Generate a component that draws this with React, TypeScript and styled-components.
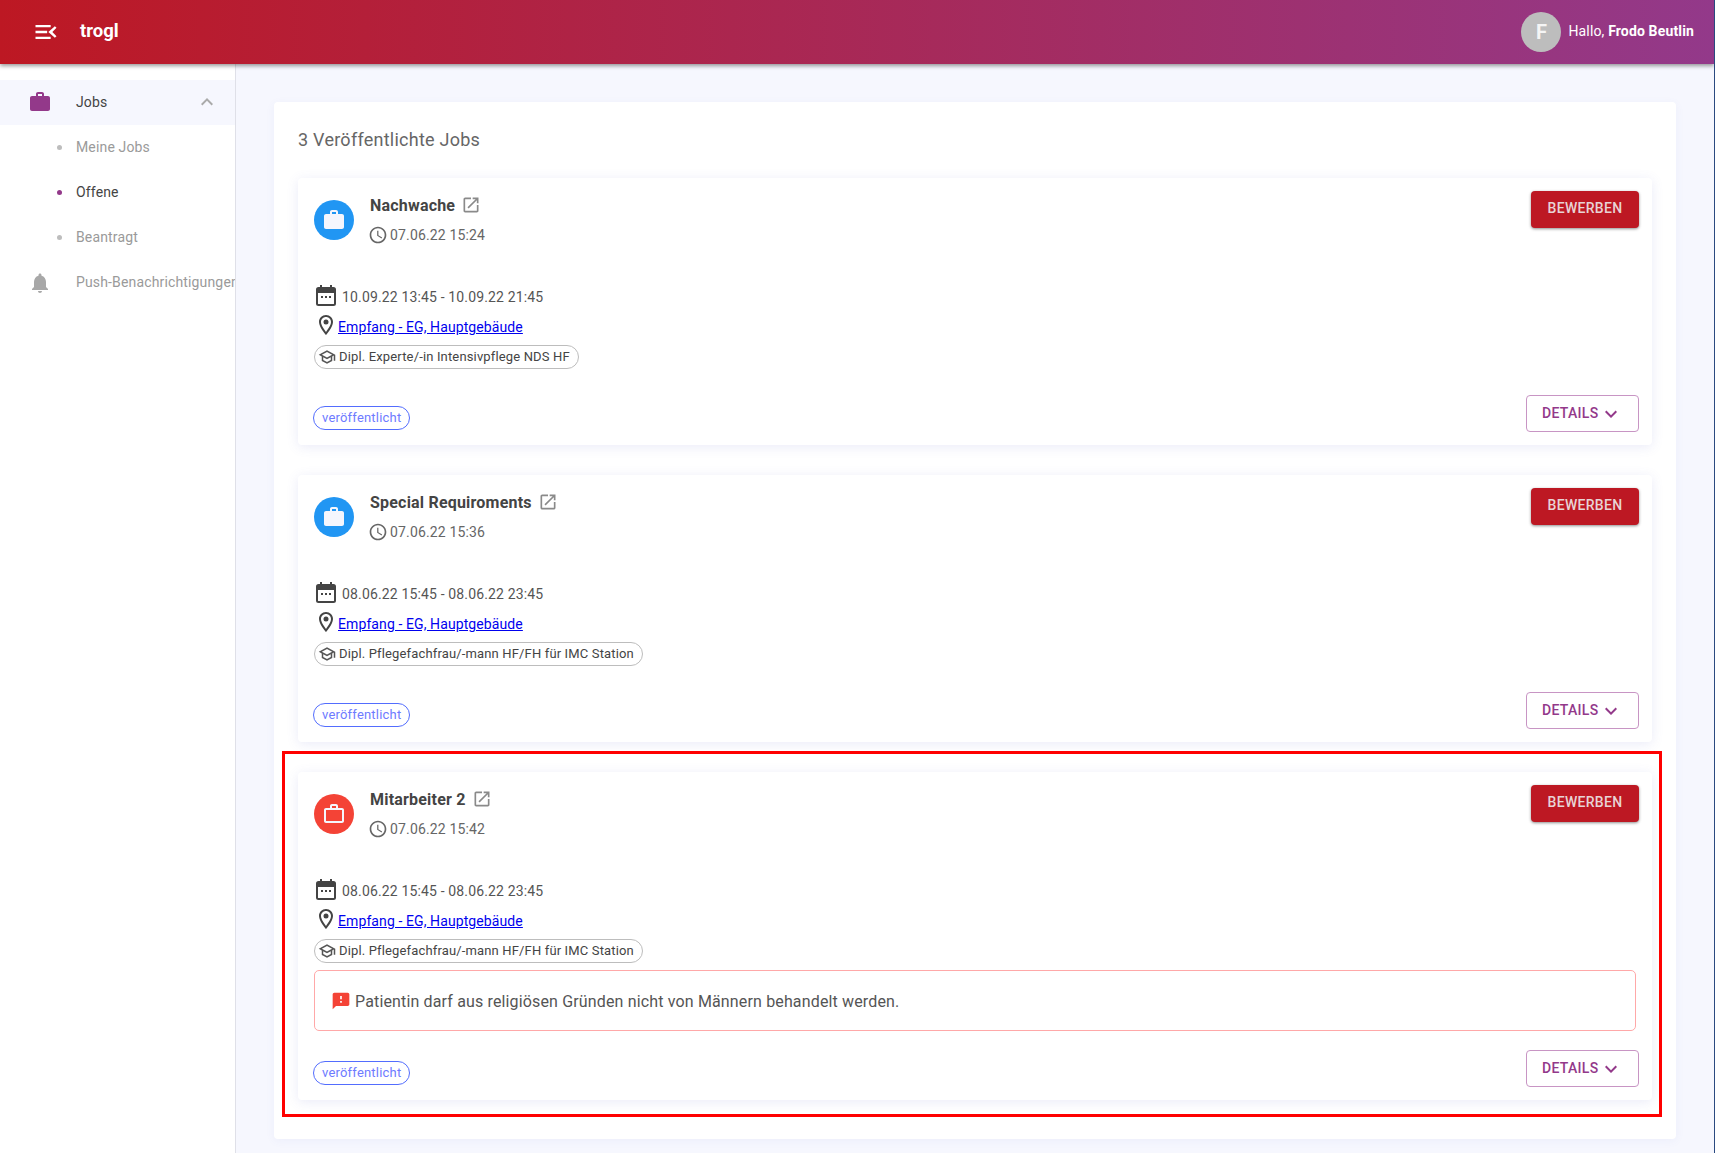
import React from "react";
import styled, { createGlobalStyle } from "styled-components";

const Global = createGlobalStyle`
  html, body { margin: 0; padding: 0; background: #f6f7fe; }
  body { font-family: Roboto, "Liberation Sans", sans-serif; }
  * { box-sizing: border-box; }
`;

const Page = styled.div`
  width: 1715px;
  height: 1153px;
  overflow: hidden;
  border-right: 1px solid #2a4a80;
  display: flex;
  flex-direction: column;
  background: #f6f7fe;
`;
const Header = styled.header`
  height: 64px;
  flex: none;
  display: flex;
  align-items: center;
  padding: 0 20px 0 32px;
  background: linear-gradient(90deg, #bd1823 0%, #93398a 100%);
  box-shadow: 0 2px 4px rgba(0, 0, 0, 0.4);
  color: #fff;
  position: relative;
  z-index: 2;
`;
const Burger = styled.svg`
  width: 28px;
  height: 28px;
  fill: #fff;
  margin-right: 20px;
`;
const Brand = styled.div`
  font-size: 18.5px;
  font-weight: 700;
  flex: 1;
  padding-bottom: 3px;
`;
const Avatar = styled.div`
  width: 40px;
  height: 40px;
  border-radius: 50%;
  background: #bdbdbd;
  display: flex;
  align-items: center;
  justify-content: center;
  font-size: 20px;
  font-weight: 700;
  color: #f5f5f5;
  margin-right: 7px;
`;
const Greeting = styled.div`
  font-size: 14px;
  letter-spacing: 0.15px;
  padding-bottom: 2px;
  b { font-weight: 700; }
`;
const Body = styled.div`
  flex: 1;
  display: flex;
  min-height: 0;
`;
const Sidebar = styled.nav`
  width: 236px;
  flex: none;
  background: #fff;
  border-right: 1px solid #dfe0e8;
  padding-top: 16px;
  overflow: hidden;
`;
const NavRow = styled.div<{ $selected?: boolean; $active?: boolean }>`
  height: 45px;
  display: flex;
  align-items: center;
  white-space: nowrap;
  font-size: 14px;
  letter-spacing: 0.15px;
  padding-bottom: 1px;
  color: ${(p) => (p.$active ? "#444" : "#9a9a9a")};
  background: ${(p) => (p.$selected ? "#f6f7fe" : "transparent")};
`;
const NavIconBox = styled.div`
  width: 76px;
  flex: none;
  display: flex;
  padding-left: 28px;
`;
const NavIcon = styled.svg<{ $c: string; $drop?: number }>`
  width: 24px;
  height: 24px;
  fill: ${(p) => p.$c};
  margin-top: ${(p) => p.$drop ?? 0}px;
`;
const Dot = styled.span<{ $on?: boolean }>`
  width: 5px;
  height: 5px;
  border-radius: 50%;
  background: ${(p) => (p.$on ? "#93398a" : "#bdbdbd")};
  margin-left: 57px;
  margin-right: 14px;
`;
const Chevron = styled.svg`
  width: 24px;
  height: 24px;
  fill: #aaa;
  margin-left: auto;
  margin-right: 16px;
`;
const Main = styled.main`
  flex: 1;
  padding: 38px 38px 0;
  min-width: 0;
`;
const Outer = styled.section`
  background: #fff;
  border-radius: 4px;
  box-shadow: 0 2px 10px rgba(90, 100, 200, 0.06);
  padding: 24px 24px 39px;
  height: 1037px;
`;
const Heading = styled.h2`
  margin: 0 0 24px;
  font-size: 18px;
  font-weight: 400;
  letter-spacing: 0.25px;
  line-height: 28px;
  color: #666;
`;
const Cards = styled.div`
  display: flex;
  flex-direction: column;
  gap: 30px;
`;
const Card = styled.article`
  position: relative;
  background: #fff;
  border-radius: 4px;
  box-shadow: 0 2px 12px rgba(90, 100, 200, 0.13);
  padding: 13px 13px 13px 16px;
`;
const Highlight = styled.div`
  position: absolute;
  left: -16px;
  right: -10px;
  top: -21px;
  bottom: -17px;
  border: 3px solid #ff0000;
  pointer-events: none;
`;
const CardHead = styled.div`
  display: flex;
  align-items: flex-start;
  height: 91px;
`;
const Round = styled.div<{ $c: string }>`
  width: 40px;
  height: 40px;
  margin-top: 9px;
  border-radius: 50%;
  background: ${(p) => p.$c};
  display: flex;
  align-items: center;
  justify-content: center;
  flex: none;
  svg { width: 24px; height: 24px; fill: #f5f6fd; }
`;
const TitleBlock = styled.div`
  margin-left: 16px;
  flex: 1;
`;
const TitleRow = styled.div`
  display: flex;
  align-items: center;
  height: 28px;
  font-size: 16px;
  font-weight: 700;
  letter-spacing: 0.2px;
  color: #444;
`;
const TitleLink = styled.svg`
  width: 20px;
  height: 20px;
  fill: #8a8a8a;
  margin-left: 6px;
`;
const TimeRow = styled.div`
  display: flex;
  align-items: center;
  height: 31px;
  margin-left: -2px;
  font-size: 14px;
  letter-spacing: 0.15px;
  color: #666;
  svg { width: 20px; height: 20px; fill: #666; margin-right: 2px; }
`;
const Primary = styled.button`
  width: 108px;
  height: 37px;
  border: 0;
  border-radius: 4px;
  background: #bd1823;
  color: #e8d3d5;
  font-family: inherit;
  font-size: 14px;
  font-weight: 500;
  letter-spacing: 0.3px;
  box-shadow: 0 1px 3px rgba(0, 0, 0, 0.45);
  padding: 0 0 3px;
`;
const Info = styled.div`
  display: flex;
  align-items: center;
  height: 30px;
`;
const DateText = styled.span`
  font-size: 14px;
  letter-spacing: 0.15px;
  color: #555;
  margin-left: 5px;
`;
const CalIcon = styled.svg`
  width: 22px;
  height: 24px;
  margin: 0 0 4px 1px;
  fill: none;
`;
const PinIcon = styled.svg`
  width: 24px;
  height: 24px;
  fill: #444;
  margin-bottom: 4px;
`;
const Place = styled.a`
  font-size: 14px;
  letter-spacing: 0.1px;
  color: #0000ee;
  text-decoration: underline;
`;
const ChipWrap = styled.div`
  display: flex;
  padding: 3px 0 7px;
`;
const Chip = styled.div`
  display: inline-flex;
  align-items: center;
  height: 24px;
  border: 1px solid #bdbdbd;
  border-radius: 12px;
  padding: 0 8px 1px 3px;
  font-size: 13px;
  letter-spacing: 0.15px;
  color: #444;
  svg { width: 18px; height: 18px; fill: #555; margin: 1px 3px 0 0; }
`;
const Alert = styled.div`
  height: 61px;
  margin-right: 3px;
  border: 1px solid #ffa8a8;
  border-radius: 5px;
  display: flex;
  align-items: center;
  padding: 1px 0 0 16px;
  font-size: 16px;
  letter-spacing: 0.15px;
  color: #555;
  svg { width: 20px; height: 20px; fill: #f44336; margin-right: 4px; }
`;
const Footer = styled.div`
  display: flex;
  justify-content: space-between;
  align-items: flex-start;
  margin-top: 19px;
`;
const Badge = styled.span`
  margin: 11px 0 0 -1px;
  height: 24px;
  border: 1px solid #536dfe;
  border-radius: 12px;
  padding: 0 8px 1px;
  display: inline-flex;
  align-items: center;
  font-size: 13px;
  letter-spacing: 0.2px;
  color: #6e7bff;
`;
const Secondary = styled.button`
  width: 113px;
  height: 37px;
  border: 1px solid #c895c4;
  border-radius: 4px;
  background: #fff;
  color: #93398a;
  font-family: inherit;
  font-size: 14px;
  font-weight: 500;
  letter-spacing: 0.3px;
  display: flex;
  align-items: center;
  padding: 0 0 2px 15px;
  svg { width: 24px; height: 24px; fill: #93398a; margin: 2px 0 0 1px; }
`;

const P = {
  work: "M20 6h-4V4c0-1.11-.89-2-2-2h-4c-1.11 0-2 .89-2 2v2H4c-1.11 0-1.99.89-1.99 2L2 19c0 1.11.89 2 2 2h16c1.11 0 2-.89 2-2V8c0-1.11-.89-2-2-2zm-6 0h-4V4h4v2z",
  workOutline: "M14 6V4h-4v2h4zM4 8v11h16V8H4zm16-2c1.11 0 2 .89 2 2v11c0 1.11-.89 2-2 2H4c-1.11 0-2-.89-2-2l.01-11c0-1.11.88-2 1.99-2h4V4c0-1.11.89-2 2-2h4c1.11 0 2 .89 2 2v2h4z",
  bell: "M12 22c1.1 0 2-.9 2-2h-4c0 1.1.89 2 2 2zm6-6v-5c0-3.07-1.64-5.64-4.5-6.32V4c0-.83-.67-1.5-1.5-1.5s-1.5.67-1.5 1.5v.68C7.63 5.36 6 7.92 6 11v5l-2 2v1h16v-1l-2-2z",
  open: "M19 19H5V5h7V3H5c-1.11 0-2 .9-2 2v14c0 1.1.89 2 2 2h14c1.1 0 2-.9 2-2v-7h-2v7zM14 3v2h3.59l-9.83 9.83 1.41 1.41L19 6.41V10h2V3h-7z",
  clock: "M11.99 2C6.47 2 2 6.48 2 12s4.47 10 9.99 10C17.52 22 22 17.52 22 12S17.52 2 11.99 2zM12 20c-4.42 0-8-3.58-8-8s3.58-8 8-8 8 3.58 8 8-3.58 8-8 8zm.5-13H11v6l5.25 3.15.75-1.23-4.5-2.67z",
  pin: "M12 2C8.13 2 5 5.13 5 9c0 5.25 7 13 7 13s7-7.75 7-13c0-3.87-3.13-7-7-7zM7 9c0-2.76 2.24-5 5-5s5 2.24 5 5c0 2.88-2.88 7.19-5 9.88C9.92 16.21 7 11.85 7 9z",
  school: "M12 3 1 9l4 2.18v6L12 21l7-3.82v-6l2-1.09V17h2V9L12 3zm6.82 6L12 12.72 5.18 9 12 5.28 18.82 9zM17 15.99l-5 2.73-5-2.73v-3.72L12 15l5-2.73v3.72z",
  alert: "M20 2H4c-1.1 0-1.99.9-1.99 2L2 22l4-4h14c1.1 0 2-.9 2-2V4c0-1.1-.9-2-2-2zm-7 12h-2v-2h2v2zm0-4h-2V6h2v4z",
  down: "M16.59 8.59 12 13.17 7.41 8.59 6 10l6 6 6-6z",
  up: "M12 8l-6 6 1.41 1.41L12 10.83l4.59 4.58L18 14z",
  menu: "M3 18h13v-2H3v2zm0-5h10v-2H3v2zm0-7v2h13V6H3zm18 9.59L17.42 12 21 8.41 19.59 7 14 12l5.59 5L21 15.59z",
};

const Glyph = ({ d }: { d: string }) => (
  <svg viewBox="0 0 24 24">
    <path d={d} />
  </svg>
);

type Job = {
  title: string;
  time: string;
  range: string;
  chip: string;
  urgent?: string;
};

const jobs: Job[] = [
  { title: "Nachwache", time: "07.06.22 15:24", range: "10.09.22 13:45 - 10.09.22 21:45", chip: "Dipl. Experte/-in Intensivpflege NDS HF" },
  { title: "Special Requiroments", time: "07.06.22 15:36", range: "08.06.22 15:45 - 08.06.22 23:45", chip: "Dipl. Pflegefachfrau/-mann HF/FH für IMC Station" },
  { title: "Mitarbeiter 2", time: "07.06.22 15:42", range: "08.06.22 15:45 - 08.06.22 23:45", chip: "Dipl. Pflegefachfrau/-mann HF/FH für IMC Station", urgent: "Patientin darf aus religiösen Gründen nicht von Männern behandelt werden." },
];

const JobCard = ({ job }: { job: Job }) => (
  <Card>
    <CardHead>
      <Round $c={job.urgent ? "#f44336" : "#2196f3"}>
        <Glyph d={job.urgent ? P.workOutline : P.work} />
      </Round>
      <TitleBlock>
        <TitleRow>
          {job.title}
          <TitleLink viewBox="0 0 24 24"><path d={P.open} /></TitleLink>
        </TitleRow>
        <TimeRow>
          <Glyph d={P.clock} />
          {job.time}
        </TimeRow>
      </TitleBlock>
      <Primary>BEWERBEN</Primary>
    </CardHead>
    <Info>
      <CalIcon viewBox="0 0 22 24">
        <rect x="2" y="5" width="18" height="17" rx="1.5" fill="none" stroke="#444" strokeWidth="2" />
        <rect x="2" y="5" width="18" height="5" fill="#444" />
        <rect x="5" y="2" width="2" height="4" fill="#444" />
        <rect x="15" y="2" width="2" height="4" fill="#444" />
        <rect x="6" y="13" width="2" height="2" fill="#444" />
        <rect x="10" y="13" width="2" height="2" fill="#444" />
        <rect x="14" y="13" width="2" height="2" fill="#444" />
      </CalIcon>
      <DateText>{job.range}</DateText>
    </Info>
    <Info>
      <PinIcon viewBox="0 0 24 24">
        <path d={P.pin} />
        <circle cx="12" cy="9" r="2.5" />
      </PinIcon>
      <Place href="#">Empfang - EG, Hauptgebäude</Place>
    </Info>
    <ChipWrap>
      <Chip>
        <Glyph d={P.school} />
        {job.chip}
      </Chip>
    </ChipWrap>
    {job.urgent && (
      <Alert>
        <Glyph d={P.alert} />
        {job.urgent}
      </Alert>
    )}
    <Footer>
      <Badge>veröffentlicht</Badge>
      <Secondary>
        DETAILS
        <Glyph d={P.down} />
      </Secondary>
    </Footer>
    {job.urgent && <Highlight />}
  </Card>
);

export default function App() {
  return (
    <Page>
      <Global />
      <Header>
        <Burger viewBox="0 0 24 24"><path d={P.menu} /></Burger>
        <Brand>trogl</Brand>
        <Avatar>F</Avatar>
        <Greeting>Hallo, <b>Frodo Beutlin</b></Greeting>
      </Header>
      <Body>
        <Sidebar>
          <NavRow $selected $active>
            <NavIconBox><NavIcon $c="#93398a" viewBox="0 0 24 24"><path d={P.work} /></NavIcon></NavIconBox>
            Jobs
            <Chevron viewBox="0 0 24 24"><path d={P.up} /></Chevron>
          </NavRow>
          <NavRow><Dot />Meine Jobs</NavRow>
          <NavRow $active><Dot $on />Offene</NavRow>
          <NavRow><Dot />Beantragt</NavRow>
          <NavRow>
            <NavIconBox><NavIcon $c="#a8a8a8" $drop={2} viewBox="0 0 24 24"><path d={P.bell} /></NavIcon></NavIconBox>
            Push-Benachrichtigungen
          </NavRow>
        </Sidebar>
        <Main>
          <Outer>
            <Heading>3 Veröffentlichte Jobs</Heading>
            <Cards>
              {jobs.map((j) => <JobCard key={j.title} job={j} />)}
            </Cards>
          </Outer>
        </Main>
      </Body>
    </Page>
  );
}
